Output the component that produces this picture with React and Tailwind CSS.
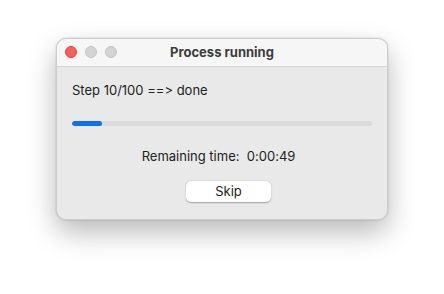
export default function App() {
  const progress = 10;
  return (
    <div className="w-[444px] h-[294px] bg-white pt-[38px] pl-[56px] font-['Inter','Liberation_Sans',sans-serif] [font-variant-ligatures:none]">
      <div className="w-[332px] h-[182px] rounded-[10px] overflow-hidden flex flex-col bg-[#e9e9e9] border border-[#cdcdcd] shadow-[0_12px_28px_rgba(0,0,0,0.28),0_0_2px_rgba(0,0,0,0.2)]">
        {/* Title bar */}
        <div className="relative h-[28px] shrink-0 bg-[#f6f6f6] border-b border-[#d2d2d2] flex items-center justify-center">
          <div className="absolute left-[8px] top-[7px] flex gap-[8px]">
            <span className="w-[12px] h-[12px] rounded-full bg-[#fe5f57] border border-[#e0443e]" />
            <span className="w-[12px] h-[12px] rounded-full bg-[#d4d4d4] border border-[#c4c4c4]" />
            <span className="w-[12px] h-[12px] rounded-full bg-[#d4d4d4] border border-[#c4c4c4]" />
          </div>
          <span className="text-[13px] font-bold text-[#3c3c3c]">Process running</span>
        </div>

        {/* Body */}
        <div className="flex-1 flex flex-col px-[15px] pt-[15px]">
          <p className="text-[13px] leading-[16px] text-[#222]">Step 10/100 ==&gt; done</p>
          <div className="mt-[23px] h-[5px] rounded-full bg-[#dcdcdc] overflow-hidden">
            <div className="h-full rounded-full bg-[#0a6ff0]" style={{ width: `${progress}%` }} />
          </div>
          <p className="mt-[22px] pr-[7px] text-[13px] leading-[16px] text-[#222] text-center">
            Remaining time:&nbsp;&nbsp;0:00:49
          </p>
          <div className="mt-[17px] pl-[13px] flex justify-center">
            <button className="w-[85px] h-[21px] rounded-[5px] bg-white text-[13px] text-[#222] shadow-[0_0.5px_1.5px_rgba(0,0,0,0.3)]">
              Skip
            </button>
          </div>
        </div>
      </div>
    </div>
  );
}
